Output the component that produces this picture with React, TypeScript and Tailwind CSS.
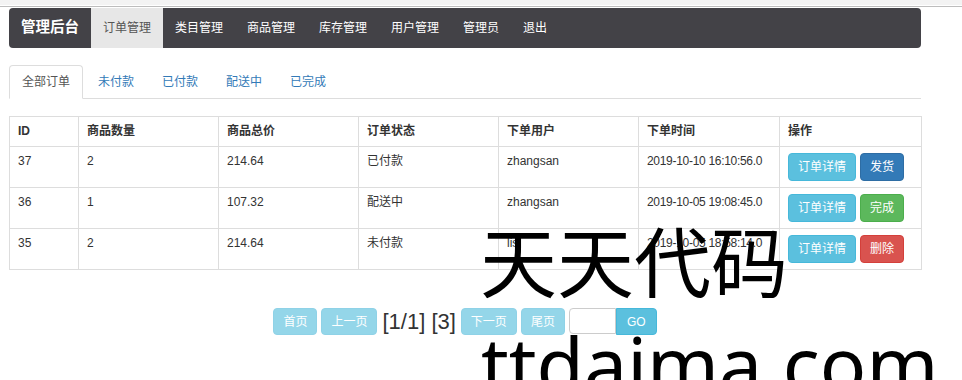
import React from 'react'

const navItems = ['类目管理', '商品管理', '库存管理', '用户管理', '管理员', '退出']
const tabs = ['未付款', '已付款', '配送中', '已完成']

const orders = [
  { id: 37, count: 2, total: '214.64', status: '已付款', user: 'zhangsan', time: '2019-10-10 16:10:56.0', action: '发货', color: 'bg-[#337ab7] border-[#2e6da4]' },
  { id: 36, count: 1, total: '107.32', status: '配送中', user: 'zhangsan', time: '2019-10-05 19:08:45.0', action: '完成', color: 'bg-[#5cb85c] border-[#4cae4c]' },
  { id: 35, count: 2, total: '214.64', status: '未付款', user: 'lisi', time: '2019-10-05 18:58:14.0', action: '删除', color: 'bg-[#d9534f] border-[#d43f3a]' },
]

const cell = 'border border-[#dddddd] px-[8px] py-[6px] align-top leading-[17px] whitespace-nowrap'
const pageBtn = 'flex h-[27px] items-center rounded-[4px] border border-[#8fd2e7] bg-[#94d6e9] px-[9px] text-white'

export default function App() {
  return (
    <div
      className="relative h-[380px] overflow-hidden bg-white text-[12px] text-[#333333]"
      style={{ fontFamily: '"Liberation Sans", "Noto Sans CJK SC", sans-serif' }}
    >
      <div className="h-[5px] bg-[#f3f3f3]" />
      <div className="h-[1px] bg-white" />
      <div className="h-[1px] bg-[#bdbdbd]" />
      <div className="h-[1px]" />

      <div className="ml-[9px] w-[912px]">
        {/* navbar */}
        <nav className="flex h-[40px] items-stretch rounded-[4px] bg-[#434247]">
          <div className="flex items-center px-[12px] text-[14.5px] font-bold text-white">管理后台</div>
          <div className="flex items-center bg-[#e7e7e7] px-[12px] text-[#555555]">订单管理</div>
          {navItems.map((n) => (
            <div key={n} className="flex items-center px-[12px] text-white">
              {n}
            </div>
          ))}
        </nav>

        {/* tabs */}
        <div className="mt-[17px] flex h-[34px] items-stretch border-b border-[#dddddd]">
          <div className="-mb-[1px] flex items-center rounded-t-[4px] border border-[#dddddd] border-b-white bg-white px-[12px] text-[#555555]">
            全部订单
          </div>
          {tabs.map((t) => (
            <div key={t} className="ml-[2px] flex items-center border border-transparent px-[12px] text-[#337ab7]">
              {t}
            </div>
          ))}
        </div>

        {/* table */}
        <table className="mt-[17px] w-[912px] table-fixed border-collapse">
          <colgroup>
            <col className="w-[69px]" />
            <col className="w-[140px]" />
            <col className="w-[140px]" />
            <col className="w-[140px]" />
            <col className="w-[140px]" />
            <col className="w-[141px]" />
            <col className="w-[142px]" />
          </colgroup>
          <thead>
            <tr className="h-[30px]">
              {['ID', '商品数量', '商品总价', '订单状态', '下单用户', '下单时间', '操作'].map((h) => (
                <th key={h} className={`${cell} text-left font-bold`}>
                  {h}
                </th>
              ))}
            </tr>
          </thead>
          <tbody>
            {orders.map((o) => (
              <tr key={o.id} className="h-[41px]">
                <td className={cell}>{o.id}</td>
                <td className={cell}>{o.count}</td>
                <td className={cell}>{o.total}</td>
                <td className={cell}>{o.status}</td>
                <td className={cell}>{o.user}</td>
                <td className={`${cell} tracking-[-0.3px]`}>{o.time}</td>
                <td className={cell}>
                  <div className="flex gap-[4px]">
                    <span className="flex h-[28px] items-center rounded-[4px] border border-[#46b8da] bg-[#5bc0de] px-[9px] text-white">
                      订单详情
                    </span>
                    <span className={`flex h-[28px] items-center rounded-[4px] border px-[9px] text-white ${o.color}`}>
                      {o.action}
                    </span>
                  </div>
                </td>
              </tr>
            ))}
          </tbody>
        </table>

        {/* pagination */}
        <div className="mt-[38px] flex items-center justify-center gap-[4px]">
          <span className={pageBtn}>首页</span>
          <span className={pageBtn}>上一页</span>
          <span className="px-[1px] text-[22px] leading-[27px] text-[#333333]">[1/1] [3]</span>
          <span className={pageBtn}>下一页</span>
          <span className={pageBtn}>尾页</span>
          <div className="flex">
            <div className="h-[26px] w-[47px] rounded-l-[4px] border border-[#cccccc] bg-white" />
            <span className="flex h-[27px] items-center rounded-r-[4px] border border-[#46b8da] bg-[#5bc0de] px-[10px] text-white">GO</span>
          </div>
        </div>
      </div>

      {/* watermark */}
      <div
        className="absolute left-[480px] top-[220px] whitespace-nowrap text-[77px] leading-none text-black"
        style={{ fontFamily: '"Noto Sans CJK SC", sans-serif' }}
      >
        天天代码
      </div>
      <div
        className="absolute left-[481px] top-[325px] whitespace-nowrap text-[77px] leading-none text-black"
        style={{ fontFamily: '"Noto Sans", sans-serif' }}
      >
        ttdaima.com
      </div>
    </div>
  )
}
